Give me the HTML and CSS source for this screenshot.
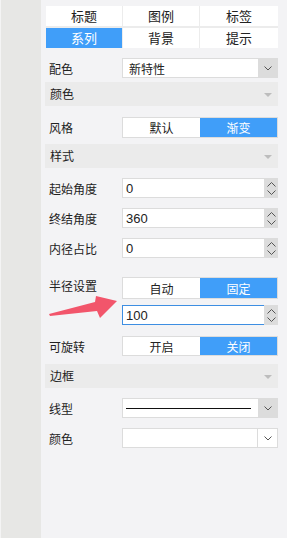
FILE: index.html
```html
<!DOCTYPE html>
<html lang="zh">
<head>
<meta charset="UTF-8">
<title>系列设置</title>
<link rel="stylesheet" href="styles.css">
</head>
<body>
    <div class="side"></div>
    <div class="panel">
        <div class="tabs">
            <div class="tab">标题</div>
            <div class="tab">图例</div>
            <div class="tab">标签</div>
            <div class="tab active">系列</div>
            <div class="tab">背景</div>
            <div class="tab">提示</div>
        </div>

        <div class="row r-first">
            <label class="lbl">配色</label>
            <div class="select">
                <span class="val">新特性</span>
                <span class="arrow"><svg width="8" height="5" viewBox="0 0 8 5"><path d="M0.5 0.5 L4 4 L7.5 0.5" fill="none" stroke="#555" stroke-width="1"/></svg></span>
            </div>
        </div>

        <div class="head h-color">颜色<i class="tri"></i></div>

        <div class="row r-style">
            <label class="lbl">风格</label>
            <div class="toggle">
                <span>默认</span>
                <span class="on">渐变</span>
            </div>
        </div>

        <div class="head h-style">样式<i class="tri"></i></div>

        <div class="row r-num">
            <label class="lbl">起始角度</label>
            <div class="spin">
                <span class="val">0</span>
                <span class="btns">
                    <svg width="9" height="5" viewBox="0 0 9 5"><path d="M0.5 4.5 L4.5 0.5 L8.5 4.5" fill="none" stroke="#555"/></svg>
                    <svg width="9" height="5" viewBox="0 0 9 5"><path d="M0.5 0.5 L4.5 4.5 L8.5 0.5" fill="none" stroke="#555"/></svg>
                </span>
            </div>
        </div>
        <div class="row r-num">
            <label class="lbl">终结角度</label>
            <div class="spin">
                <span class="val">360</span>
                <span class="btns">
                    <svg width="9" height="5" viewBox="0 0 9 5"><path d="M0.5 4.5 L4.5 0.5 L8.5 4.5" fill="none" stroke="#555"/></svg>
                    <svg width="9" height="5" viewBox="0 0 9 5"><path d="M0.5 0.5 L4.5 4.5 L8.5 0.5" fill="none" stroke="#555"/></svg>
                </span>
            </div>
        </div>
        <div class="row r-num">
            <label class="lbl">内径占比</label>
            <div class="spin">
                <span class="val">0</span>
                <span class="btns">
                    <svg width="9" height="5" viewBox="0 0 9 5"><path d="M0.5 4.5 L4.5 0.5 L8.5 4.5" fill="none" stroke="#555"/></svg>
                    <svg width="9" height="5" viewBox="0 0 9 5"><path d="M0.5 0.5 L4.5 4.5 L8.5 0.5" fill="none" stroke="#555"/></svg>
                </span>
            </div>
        </div>

        <div class="row r-radius">
            <label class="lbl lbl-up">半径设置</label>
            <div class="toggle tall">
                <span>自动</span>
                <span class="on">固定</span>
            </div>
        </div>
        <div class="row r-fixed">
            <label class="lbl"></label>
            <div class="spin focus">
                <span class="val">100</span>
                <span class="btns">
                    <svg width="9" height="5" viewBox="0 0 9 5"><path d="M0.5 4.5 L4.5 0.5 L8.5 4.5" fill="none" stroke="#555"/></svg>
                    <svg width="9" height="5" viewBox="0 0 9 5"><path d="M0.5 0.5 L4.5 4.5 L8.5 0.5" fill="none" stroke="#555"/></svg>
                </span>
            </div>
        </div>
        <div class="row r-rotate">
            <label class="lbl">可旋转</label>
            <div class="toggle">
                <span>开启</span>
                <span class="on">关闭</span>
            </div>
        </div>

        <div class="head h-border">边框<i class="tri"></i></div>

        <div class="row r-first">
            <label class="lbl">线型</label>
            <div class="select">
                <span class="val"><i class="line"></i></span>
                <span class="arrow"><svg width="8" height="5" viewBox="0 0 8 5"><path d="M0.5 0.5 L4 4 L7.5 0.5" fill="none" stroke="#555" stroke-width="1"/></svg></span>
            </div>
        </div>
        <div class="row r-num">
            <label class="lbl">颜色</label>
            <div class="select plain">
                <span class="val"></span>
                <span class="arrow"><svg width="8" height="5" viewBox="0 0 8 5"><path d="M0.5 0.5 L4 4 L7.5 0.5" fill="none" stroke="#555" stroke-width="1"/></svg></span>
            </div>
        </div>
    </div>

    <!-- pointer over the fixed radius input -->
    <svg class="pointer" width="85" height="32" viewBox="0 0 85 32">
        <polygon points="9,24 55,12 56,6 77,11 60,28 57,21 10,26" fill="#f2556b"/>
    </svg>
</body>
</html>
```
FILE: styles.css
```css
body {
    margin: 0;
    height: 538px;
    display: flex;
    font-family: "Noto Sans CJK SC", "Noto Sans", sans-serif;
    font-size: 12px;
    color: #222;
    overflow: hidden;
}
.side {
    width: 41px;
    background-color: #e7e7e5;
    border-left: 1px solid #f4f4f4;
}
.panel {
    flex: 1;
    background-color: #f3f3f5;
    padding: 6px 9px 0 4px;
}
.tabs {
    display: grid;
    grid-template-columns: 76px 76px 78px;
    gap: 2px 1px;
    margin-left: 1px;
    background-color: #ececec;
}
.tab {
    height: 20px;
    line-height: 20px;
    text-align: center;
    background-color: #fff;
    font-size: 13px;
}
.tab.active {
    background-color: #409ef9;
    color: #fff;
}
.row {
    display: flex;
    align-items: center;
    height: 20px;
    margin-top: 10px;
}
.r-style {
    margin-top: 11px;
    height: 21px;
}
.r-radius {
    margin-top: 19px;
    height: 22px;
}
.r-fixed {
    margin-top: 6px;
}
.r-rotate {
    margin-top: 11px;
}
.lbl {
    width: 73px;
    padding-left: 4px;
    flex-shrink: 0;
}
.lbl-up {
    margin-top: -5px;
}
.head {
    height: 24px;
    line-height: 24px;
    background-color: #ebebeb;
    padding-left: 5px;
    position: relative;
}
.h-color {
    margin-top: 4px;
}
.h-style {
    margin-top: 6px;
}
.h-border {
    margin-top: 8px;
}
.tri {
    position: absolute;
    right: 6px;
    top: 11px;
    border-left: 4px solid transparent;
    border-right: 4px solid transparent;
    border-top: 4px solid #bdbdbd;
}
.select, .spin {
    flex: 1;
    height: 100%;
    display: flex;
    box-sizing: border-box;
    border: 1px solid #dcdcdc;
    background-color: #fff;
}
.val {
    flex: 1;
    display: flex;
    align-items: center;
    padding-left: 6px;
}
.spin .val {
    padding-left: 3px;
    font-family: "Liberation Sans", Arial, sans-serif;
    font-size: 13px;
}
.arrow {
    width: 19px;
    display: flex;
    align-items: center;
    justify-content: center;
    background-color: #dcdcdc;
}
.plain .arrow {
    background-color: #fff;
    border-left: 1px solid #dcdcdc;
}
.line {
    width: 125px;
    height: 1px;
    background-color: #111;
    margin-left: -3px;
}
.btns {
    width: 14px;
    margin: -1px -1px -1px 0;
    display: flex;
    flex-direction: column;
    align-items: center;
    justify-content: center;
    gap: 3px;
    background-color: #dcdcdc;
}
.spin.focus {
    border-color: #3d8ee2;
}
.toggle {
    flex: 1;
    height: 100%;
    display: flex;
    box-sizing: border-box;
    border: 1px solid #dcdcdc;
    background-color: #fff;
}
.toggle span {
    flex: 1;
    display: flex;
    align-items: center;
    justify-content: center;
}
.toggle .on {
    background-color: #409ef9;
    color: #fff;
}
.pointer {
    position: absolute;
    left: 40px;
    top: 290px;
}
```
